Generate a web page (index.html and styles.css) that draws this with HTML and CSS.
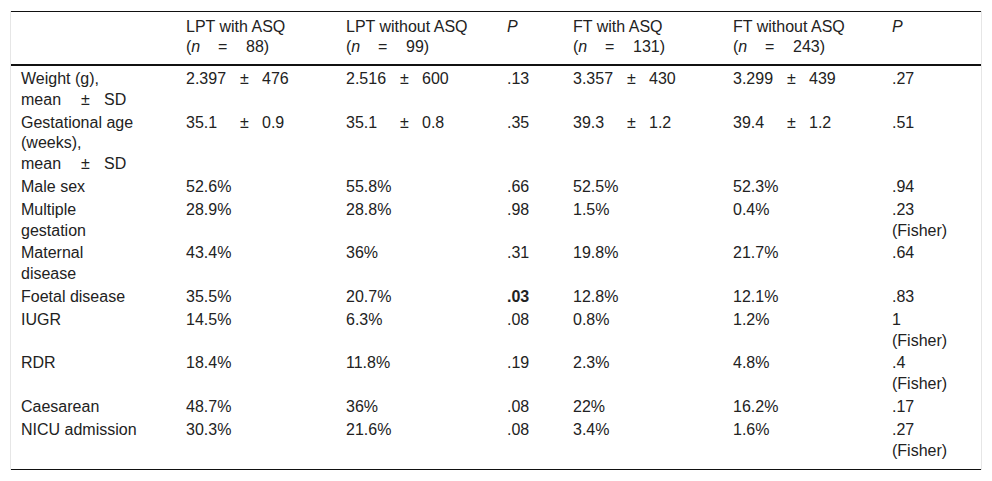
FILE: index.html
```html
<!DOCTYPE html>
<html lang="en">
<head>
<meta charset="utf-8">
<title>Table</title>
<link rel="stylesheet" href="styles.css">
</head>
<body>
<div class="wrap">
<table class="tbl">
<colgroup>
<col class="c1"><col class="c2"><col class="c3"><col class="c4"><col class="c5"><col class="c6"><col class="c7">
</colgroup>
<thead>
<tr>
<th></th>
<th>LPT with ASQ<br><span class="nl">(<i>n</i></span><span class="eq">=</span>88)</th>
<th>LPT without ASQ<br><span class="nl">(<i>n</i></span><span class="eq">=</span>99)</th>
<th><i>P</i></th>
<th>FT with ASQ<br><span class="nl">(<i>n</i></span><span class="eq">=</span>131)</th>
<th>FT without ASQ<br><span class="nl">(<i>n</i></span><span class="eq">=</span>243)</th>
<th><i>P</i></th>
</tr>
</thead>
<tbody>
<tr class="first"><td>Weight (g),<br><span class="ml">mean</span><span class="mpm">±</span>SD</td><td><span class="v">2.397</span><span class="pm">±</span>476</td><td><span class="v">2.516</span><span class="pm">±</span>600</td><td>.13</td><td><span class="v">3.357</span><span class="pm">±</span>430</td><td><span class="v">3.299</span><span class="pm">±</span>439</td><td>.27</td></tr>
<tr><td>Gestational age<br>(weeks),<br><span class="ml">mean</span><span class="mpm">±</span>SD</td><td><span class="v">35.1</span><span class="pm">±</span>0.9</td><td><span class="v">35.1</span><span class="pm">±</span>0.8</td><td>.35</td><td><span class="v">39.3</span><span class="pm">±</span>1.2</td><td><span class="v">39.4</span><span class="pm">±</span>1.2</td><td>.51</td></tr>
<tr><td>Male sex</td><td>52.6%</td><td>55.8%</td><td>.66</td><td>52.5%</td><td>52.3%</td><td>.94</td></tr>
<tr><td>Multiple<br>gestation</td><td>28.9%</td><td>28.8%</td><td>.98</td><td>1.5%</td><td>0.4%</td><td>.23<br>(Fisher)</td></tr>
<tr><td>Maternal<br>disease</td><td>43.4%</td><td>36%</td><td>.31</td><td>19.8%</td><td>21.7%</td><td>.64</td></tr>
<tr><td>Foetal disease</td><td>35.5%</td><td>20.7%</td><td><b>.03</b></td><td>12.8%</td><td>12.1%</td><td>.83</td></tr>
<tr><td>IUGR</td><td>14.5%</td><td>6.3%</td><td>.08</td><td>0.8%</td><td>1.2%</td><td>1<br>(Fisher)</td></tr>
<tr><td>RDR</td><td>18.4%</td><td>11.8%</td><td>.19</td><td>2.3%</td><td>4.8%</td><td>.4<br>(Fisher)</td></tr>
<tr><td>Caesarean</td><td>48.7%</td><td>36%</td><td>.08</td><td>22%</td><td>16.2%</td><td>.17</td></tr>
<tr class="last"><td>NICU admission</td><td>30.3%</td><td>21.6%</td><td>.08</td><td>3.4%</td><td>1.6%</td><td>.27<br>(Fisher)</td></tr>
</tbody>
</table>
</div>
</body>
</html>
```
FILE: styles.css
```css
html, body {
  margin: 0;
  padding: 0;
  background: #fff;
}
body {
  font-family: "Liberation Sans", Arial, sans-serif;
  font-size: 16px;
  color: #222;
}
.wrap {
  margin: 11px 0 0 10px;
  width: 970px;
  border-left: 1px solid #e6e6e6;
  border-right: 1px solid #e6e6e6;
}
.tbl {
  width: 970px;
  border-collapse: collapse;
  table-layout: fixed;
  border-top: 1px solid #111;
  border-bottom: 1px solid #111;
}
.c1 { width: 165px; }
.c2 { width: 160px; }
.c3 { width: 161px; }
.c4 { width: 66px; }
.c5 { width: 160px; }
.c6 { width: 159px; }
.c7 { width: 99px; }
th, td {
  text-align: left;
  vertical-align: top;
}
th {
  font-weight: normal;
  line-height: 20px;
  padding: 5px 10px 7px 10px;
  border-bottom: 2px solid #111;
}
td {
  line-height: 20.8px;
  padding: 1px 10px;
}
.first td {
  padding-top: 3px;
}
.last td {
  padding-bottom: 8px;
}
.nl {
  display: inline-block;
  width: 32px;
}
.eq {
  display: inline-block;
  width: 28px;
}
.v {
  display: inline-block;
  width: 54px;
}
.pm {
  display: inline-block;
  width: 22px;
}
.ml {
  display: inline-block;
  width: 60px;
}
.mpm {
  display: inline-block;
  width: 23px;
}
```
